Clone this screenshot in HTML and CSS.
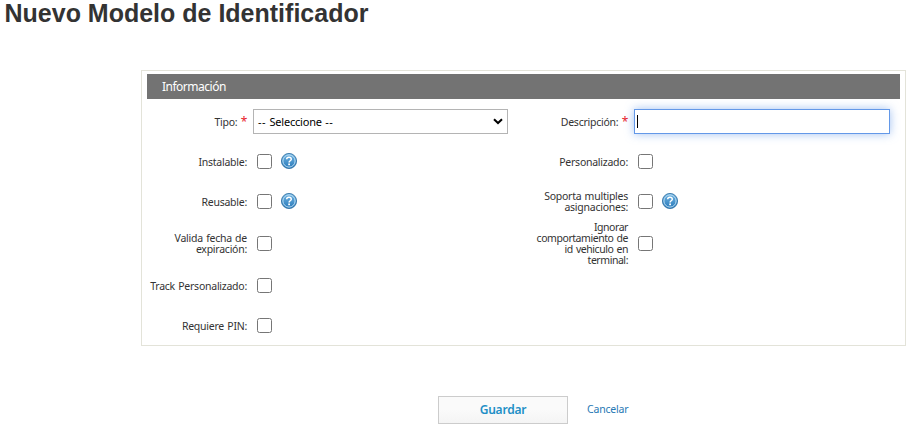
FILE: index.html
```html
<!DOCTYPE html>
<html lang="es">
<head>
<meta charset="utf-8">
<title>Nuevo Modelo de Identificador</title>
<link rel="stylesheet" href="styles.css">
</head>
<body>
<svg width="0" height="0" class="defs">
  <defs>
    <linearGradient id="blue" x1="0" y1="0" x2="0" y2="1"><stop offset="0" stop-color="#72b6e4"/><stop offset="1" stop-color="#2878b8"/></linearGradient>
    <symbol id="help" viewBox="0 0 16 16">
      <circle cx="8" cy="8" r="7.6" fill="url(#blue)" stroke="#286ba0" stroke-width=".8"/>
      <circle cx="8" cy="8" r="6.1" fill="none" stroke="#c4e2f5" stroke-width=".9"/>
      <path d="M5.7 6.3C5.7 3.5 10.3 3.5 10.3 6.2C10.3 7.8 8.1 7.7 8.1 9.5" fill="none" stroke="#fff" stroke-width="1.5"/>
      <rect x="7.2" y="10.5" width="1.8" height="1.7" fill="#fff"/>
    </symbol>
  </defs>
</svg>
<h1>Nuevo Modelo de Identificador</h1>
<form>
  <section class="panel">
    <h2>Información</h2>
    <div class="grid">
      <div class="label">Tipo: <b>*</b></div>
      <div class="field"><div class="select"><span><span class="dash">-- </span>Seleccione<span class="dash"> --</span></span><svg width="10" height="7" viewBox="0 0 10 7"><path d="M1 1.2L5 5L9 1.2" fill="none" stroke="#000" stroke-width="2"/></svg></div></div>
      <div class="label">Descripción: <b>*</b></div>
      <div class="field"><div class="input"><i class="caret"></i></div></div>

      <div class="label">Instalable:</div>
      <div class="field"><input type="checkbox"><svg class="help"><use href="#help"/></svg></div>
      <div class="label">Personalizado:</div>
      <div class="field"><input type="checkbox"></div>

      <div class="label">Reusable:</div>
      <div class="field"><input type="checkbox"><svg class="help"><use href="#help"/></svg></div>
      <div class="label">Soporta multiples<br>asignaciones:</div>
      <div class="field"><input type="checkbox"><svg class="help"><use href="#help"/></svg></div>

      <div class="label">Valida fecha de<br>expiración:</div>
      <div class="field"><input type="checkbox"></div>
      <div class="label tight">Ignorar<br>comportamiento de<br>id vehiculo en<br>terminal:</div>
      <div class="field"><input type="checkbox"></div>

      <div class="label">Track Personalizado:</div>
      <div class="field"><input type="checkbox"></div>
      <div></div><div></div>

      <div class="label">Requiere PIN:</div>
      <div class="field"><input type="checkbox"></div>
    </div>
  </section>
  <div class="actions">
    <button type="button">Guardar</button>
    <a>Cancelar</a>
  </div>
</form>
</body>
</html>
```
FILE: styles.css
```css
* { box-sizing: border-box; }
body { margin: 0; background: #fff; color: #333; font: 11px/11px "Noto Sans", sans-serif; overflow: hidden; }
.defs { position: absolute; }
h1 { margin: 0; padding: 0 0 0 4.5px; height: 70px; font: bold 25px/27px "Liberation Sans", Arial, sans-serif; white-space: nowrap; }
.panel { width: 765px; height: 276px; margin-left: 141px; border: 1px solid #e3e3d9; padding: 3px 5px 0; }
h2 { margin: 0; height: 25px; background: #737373; color: #fff; font: 12px/25px "Noto Sans", sans-serif; padding-left: 15px; letter-spacing: -.5px; }
.grid { display: grid; grid-template-columns: 100px 281px 100px 272px; grid-template-rows: 41px 39px 41px 43px 41px 39px; padding-top: 2px; }
.label { align-self: center; text-align: right; white-space: nowrap; font-size: 10.5px; letter-spacing: -.25px; word-spacing: .8px; padding-top: 1px; }
.label.tight { letter-spacing: -.45px; }
.label b { color: #e8202a; font-weight: normal; font-size: 12px; line-height: 10px; }
.field { display: flex; align-items: center; padding-left: 10px; }
input { appearance: none; width: 15px; height: 15px; margin: 0; border: 1px solid #767676; border-radius: 2.5px; background: #fff; }
.help { width: 16px; height: 16px; margin: -1px 0 0 9px; }
.select { display: flex; align-items: center; justify-content: space-between; width: 255px; height: 25px; margin-left: -4px; padding: 0 4px; border: 1px solid #b4b4b4; color: #000; letter-spacing: -.2px; }
.select .dash { letter-spacing: .5px; }
.input { width: 256px; height: 25px; margin-left: -4px; border: 1px solid #6398e8; box-shadow: 0 0 10px rgba(99,152,232,.6); padding: 5px 2px; }
.caret { display: block; width: 1px; height: 13px; background: #000; }
.actions { display: flex; align-items: center; margin: 50px 0 0 438px; height: 28px; }
button { width: 130px; height: 28px; padding: 0 0 2px; border: 1px solid #ccc; background: linear-gradient(#fafafa 50%, #f4f4f4); color: #218fc6; font: 600 12px "Noto Sans", sans-serif; letter-spacing: -.2px; }
.actions a { margin: -1px 0 0 19px; color: #2779b5; font-size: 10.5px; letter-spacing: -.2px; }
```
